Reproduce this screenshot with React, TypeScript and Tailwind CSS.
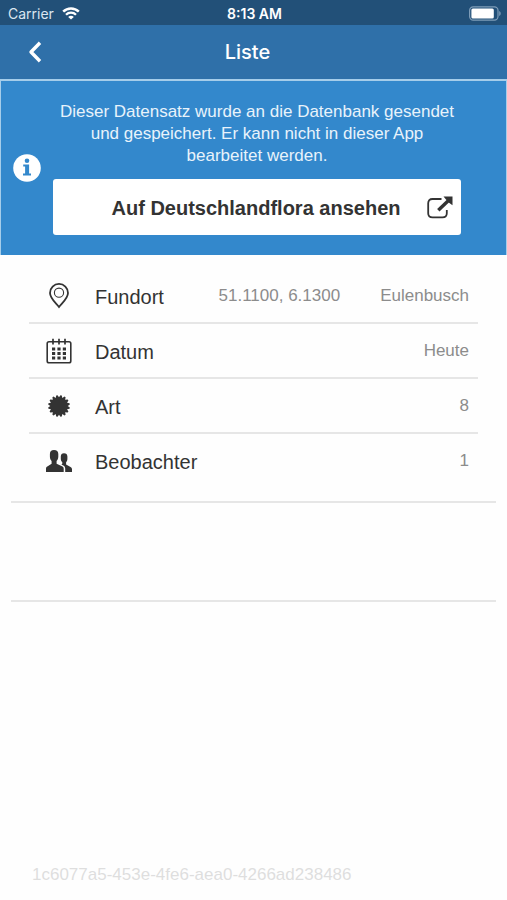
import type { ReactNode } from "react";

function WifiIcon() {
  return (
    <svg viewBox="0 0 18 13" className="h-[13px] w-[18px]" fill="none" stroke="#fff" aria-hidden="true">
      <path d="M1.2 4.7a11 11 0 0 1 15.6 0" strokeWidth="2.5" />
      <path d="M4 7.7a7 7 0 0 1 10 0" strokeWidth="2.3" />
      <path d="M9 12.6 6.2 9.9a3.9 3.9 0 0 1 5.6 0z" fill="#fff" stroke="none" />
    </svg>
  );
}

function BatteryIcon() {
  return (
    <svg viewBox="0 0 33 15" className="h-[15px] w-[33px]" aria-hidden="true">
      <rect x="1.6" y="0.8" width="28.4" height="13.4" rx="3.6" fill="none" stroke="#7f9db8" strokeWidth="1.2" />
      <rect x="3.4" y="2.6" width="22.4" height="9.8" rx="1.5" fill="#fff" />
      <path d="M31.200 5v5c1-.5 1.500-1.400 1.500-2.500s-.5-2-1.500-2.500z" fill="#7f9db8" />
    </svg>
  );
}

function BackIcon() {
  return (
    <svg viewBox="0 0 14 22" className="h-[22px] w-[14px]" fill="none" stroke="#fff" strokeWidth="3.4" aria-hidden="true">
      <path d="M12 1.800 3 11l9 9.200" strokeLinejoin="round" />
    </svg>
  );
}

function InfoIcon() {
  return (
    <svg viewBox="0 0 28 28" className="h-7 w-7 shrink-0" aria-hidden="true">
      <circle cx="14" cy="14" r="13.800" fill="#fff" />
      <circle cx="14" cy="6.800" r="2.300" fill="#3388cc" />
      <path d="M10.200 10.400h5.900v9h1.900v2.200h-8v-2.200h2.100v-6.800h-1.900z" fill="#3388cc" />
    </svg>
  );
}

function ExternalIcon() {
  return (
    <svg viewBox="0 0 26 23" className="h-[23px] w-[26px]" fill="none" stroke="#333" aria-hidden="true">
      <path d="M14.500 3H5.500Q1.200 3 1.200 7.300V17.200Q1.200 21.300 5.500 21.300H15.500Q19.800 21.300 19.800 17.200V14" strokeWidth="1.800" />
      <path d="M11.300 14.300 21.500 4.500" strokeWidth="3.400" />
      <path d="M16.500.5H25.500V9.300L22 6.800 19 3.500z" fill="#333" stroke="none" />
    </svg>
  );
}

function PinIcon() {
  return (
    <svg viewBox="0 0 20 26" className="h-[26px] w-5" fill="none" stroke="#333" aria-hidden="true">
      <path d="M10 24C7.500 20.500 1 15.400 1 9.900a9 9 0 0 1 18 0C19 15.400 12.500 20.500 10 24z" strokeWidth="1.800" />
      <circle cx="10" cy="9.700" r="4.600" strokeWidth="1.100" />
    </svg>
  );
}

function CalendarIcon() {
  return (
    <svg viewBox="0 0 26 26" className="h-[26px] w-[26px]" fill="none" stroke="#333" aria-hidden="true">
      <rect x="1.200" y="3.800" width="23.600" height="21" rx="1.800" strokeWidth="1.600" />
      <path d="M7 .8V6.400M13 .8V6.400M19 .8V6.400" strokeWidth="1.700" />
      <path
        d="M6 11h3.200M11.400 11h3.200M16.800 11H20M6 15.500h3.200M11.400 15.500h3.200M16.800 15.500H20M6 20h3.200M11.400 20h3.200M16.800 20H20"
        strokeWidth="3"
      />
    </svg>
  );
}

const burst = Array.from({ length: 16 }, (_, i) => {
  const center = ((i + 0.5) * Math.PI) / 8;
  return [
    [10.9, -0.06],
    [10.9, 0.06],
    [8.7, Math.PI / 16],
  ]
    .map(([r, offset]) => {
      const a = center + offset;
      return `${(11 + r * Math.cos(a)).toFixed(2)},${(11 + r * Math.sin(a)).toFixed(2)}`;
    })
    .join(" ");
}).join(" ");

function BurstIcon() {
  return (
    <svg viewBox="0 0 22 22" className="h-[22px] w-[22px]" fill="#333" aria-hidden="true">
      <polygon points={burst} />
    </svg>
  );
}

function PeopleIcon() {
  return (
    <svg viewBox="0 0 26 22" className="h-[22px] w-[26px]" fill="#333" aria-hidden="true">
      <path d="M8 0C10.800 0 12.300 1.400 12.300 4v2.600c0 1.900-.5 3.300-1.700 4.400v2.800L16 16.200c1.300.6 1.700 1.300 1.700 2.600V22H0v-3.200c0-1.300.4-2 1.700-2.600l3.900-2.400V11C4.400 9.900 3.900 8.500 3.900 6.600V4C3.900 1.400 5.300 0 8 0z" />
      <path d="M18 3.200c2.200 0 3.400 1.200 3.400 3.400v2.200c0 1.500-.4 2.600-1.300 3.500v2.300l4.400 2.300c1.100.6 1.500 1.300 1.500 2.400V22h-6.800v-3.400c0-1.500-.6-2.500-1.900-3.200l-1.900-1 .9-.6v-1.500c-1-.9-1.500-2-1.500-3.500V6.600c0-2.200 1.100-3.400 3.200-3.400z" />
    </svg>
  );
}

type RecordRow = { icon: ReactNode; label: string; detail?: string; value: string };

const rows: RecordRow[] = [
  { icon: <PinIcon />, label: "Fundort", detail: "51.1100, 6.1300", value: "Eulenbusch" },
  { icon: <CalendarIcon />, label: "Datum", value: "Heute" },
  { icon: <BurstIcon />, label: "Art", value: "8" },
  { icon: <PeopleIcon />, label: "Beobachter", value: "1" },
];

export default function App() {
  return (
    <div className="flex min-h-screen flex-col bg-[#fefefe] font-['Liberation_Sans',Arial,sans-serif] text-[#333]">
      <div className="grid h-[25px] grid-cols-[1fr_auto_1fr] items-center bg-[#225078] pr-1.5 pl-2 pt-0.5 font-[Inter,sans-serif] text-sm text-white">
        <div className="flex items-center gap-2 text-[#dbe6f0]">
          <span>Carrier</span>
          <WifiIcon />
        </div>
        <span className="font-semibold">8:13 AM</span>
        <div className="flex justify-end">
          <BatteryIcon />
        </div>
      </div>

      <header className="grid h-[54px] grid-cols-[1fr_auto_1fr] items-center bg-[#2f70a9] pr-10 pl-7 text-white">
        <button type="button" aria-label="Zurück" className="justify-self-start">
          <BackIcon />
        </button>
        <h1 className="font-[Inter,sans-serif] text-xl font-medium">Liste</h1>
      </header>

      <section className="flex items-center border-x border-t-2 border-[#a5cdea] bg-[#3388cc] pr-[45px] pb-5 pl-3 pt-5">
        <InfoIcon />
        <div className="ml-3 flex-1">
          <p className="px-1 text-center text-[17px] leading-[22px] text-[#e8f3fb]">
            Dieser Datensatz wurde an die Datenbank gesendet und gespeichert. Er kann nicht in dieser App bearbeitet
            werden.
          </p>
          <a
            href="#deutschlandflora"
            className="mt-3 flex h-14 items-center rounded-[3px] bg-white pr-2 pl-8 text-xl font-bold"
          >
            <span className="flex-1 pt-0.5 text-center">Auf Deutschlandflora ansehen</span>
            <ExternalIcon />
          </a>
        </div>
      </section>

      <main className="flex flex-1 flex-col">
        <div className="mx-[11px] border-b-2 border-[#e6e6e6] px-[18px] pt-3.5 pb-3.5">
          <ul className="divide-y-2 divide-[#e6e6e6]">
            {rows.map((row) => (
              <li
                key={row.label}
                className="flex h-[55px] items-center pr-[9px] text-[17px] text-[#8c8c8c] last:h-[53px]"
              >
                <span className="flex w-[60px] justify-center">{row.icon}</span>
                <span className="ml-1.5 flex-1 pt-0.5 text-xl text-[#333]">{row.label}</span>
                {row.detail && <span className="mr-10">{row.detail}</span>}
                <span>{row.value}</span>
              </li>
            ))}
          </ul>
        </div>
        <div className="mx-[11px] h-[99px] border-b-2 border-[#e6e6e6]" />
        <p className="mt-auto px-8 pb-3 text-[17px] leading-[26px] text-[#dedede]">
          1c6077a5-453e-4fe6-aea0-4266ad238486
        </p>
      </main>
    </div>
  );
}
